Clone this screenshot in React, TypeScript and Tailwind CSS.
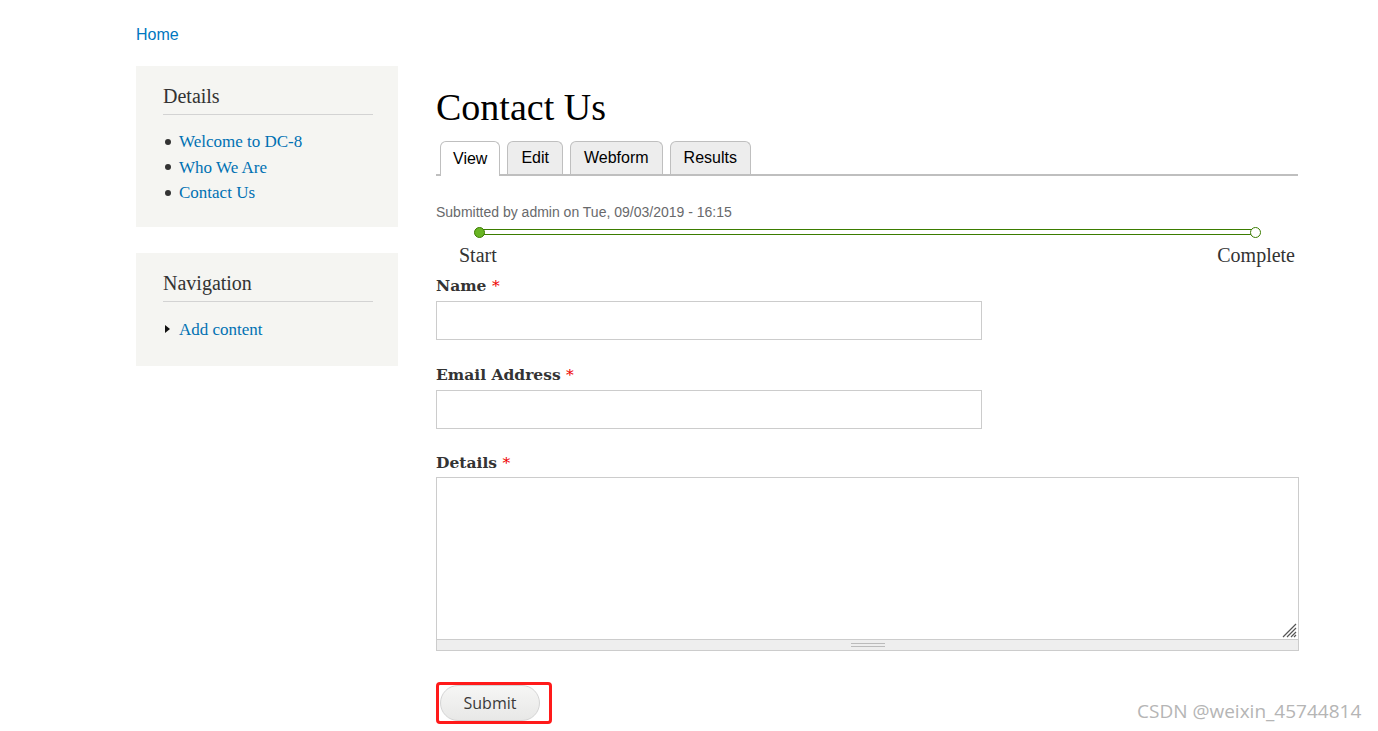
import React from "react";

const serif = "font-['Georgia','Liberation_Serif',serif]";
const label = "block font-['DejaVu_Serif',serif] text-[15.5px] font-bold leading-[20px]";

function Block({ title, children }: { title: string; children: React.ReactNode }) {
  return (
    <div className="bg-[#f5f5f2] px-[27px] pt-[18px] pb-[21px] pr-[25px]">
      <h2 className={`${serif} text-[20px] leading-[24px] text-[#333] pb-[6px] border-b border-[#d3d3d3]`}>{title}</h2>
      {children}
    </div>
  );
}

export default function App() {
  return (
    <div className="relative min-h-[731px] w-[1378px] bg-white">
      <div className="pl-[136px] pt-[22px]">
        <a className="font-['Liberation_Sans',Arial,sans-serif] text-[16px] leading-[22px] text-[#0077c0]">Home</a>
      </div>
      <div className="flex pl-[136px] pt-[20px]">
        {/* Sidebar */}
        <aside className="w-[262px] flex flex-col gap-[26px]">
          <Block title="Details">
            <ul className={`${serif} mt-[14px] text-[17px] leading-[25.5px] text-[#0071b3]`}>
              {["Welcome to DC-8", "Who We Are", "Contact Us"].map((t) => (
                <li key={t} className="flex items-center">
                  <span className="mr-[8px] ml-[2px] h-[6px] w-[6px] rounded-full bg-[#333]" />
                  <a>{t}</a>
                </li>
              ))}
            </ul>
          </Block>
          <Block title="Navigation">
            <ul className={`${serif} mt-[15px] mb-[3px] text-[17px] leading-[25.5px] text-[#0071b3]`}>
              <li className="flex items-center">
                <span className="ml-[2px] mr-[9px] h-0 w-0 border-y-[4px] border-l-[5px] border-y-transparent border-l-[#111]" />
                <a>Add content</a>
              </li>
            </ul>
          </Block>
        </aside>

        {/* Main */}
        <main className="ml-[38px] w-[862px]">
          <h1 className={`${serif} mt-[21px] text-[38px] leading-[40px] text-black`}>Contact Us</h1>
          <div className="mt-[14px] flex items-end gap-[7px] border-b-2 border-[#bfbfbf] pl-[4px] font-['Liberation_Sans',Arial,sans-serif] text-[16px]">
            <div className="-mb-[2px] flex h-[35px] items-center rounded-t-[6px] border border-b-0 border-[#bfbfbf] bg-white px-[12px] text-black">View</div>
            <div className="flex h-[33px] items-center rounded-t-[6px] border border-b-0 border-[#bfbfbf] bg-[#ededed] px-[13px] text-black">Edit</div>
            <div className="flex h-[33px] items-center rounded-t-[6px] border border-b-0 border-[#bfbfbf] bg-[#ededed] px-[13px] text-black">Webform</div>
            <div className="flex h-[33px] items-center rounded-t-[6px] border border-b-0 border-[#bfbfbf] bg-[#ededed] px-[13px] text-black">Results</div>
          </div>

          <p className="mt-[27px] font-['Liberation_Sans',Arial,sans-serif] text-[14px] leading-[18px] text-[#68696b]">
            Submitted by admin on Tue, 09/03/2019 - 16:15
          </p>

          {/* Progress */}
          <div className="relative mt-[5px] h-[14px]">
            <div className="absolute left-[44px] right-[43px] top-[3px] h-[6px] border-y-[1.5px] border-[#3b7c00]" />
            <div className="absolute left-[38px] top-[1px] h-[11px] w-[11px] rounded-full border border-[#3b7c00] bg-[#69b524]" />
            <div className="absolute right-[37px] top-[1px] h-[11px] w-[11px] rounded-full border border-[#3b7c00] bg-white" />
          </div>
          <div className={`${serif} mt-[3px] flex justify-between text-[20px] leading-[24px] text-[#333]`}>
            <span className="pl-[23px]">Start</span>
            <span className="pr-[3px]">Complete</span>
          </div>

          {/* Form */}
          <div className={`${serif} mt-[9px] text-[#333]`}>
            <label className={label}>
              Name <span className="font-normal text-[#e00]">*</span>
            </label>
            <div className="mt-[5px] h-[39px] w-[546px] border border-[#cccccc]" />

            <label className={`${label} mt-[25px]`}>
              Email Address <span className="font-normal text-[#e00]">*</span>
            </label>
            <div className="mt-[5px] h-[39px] w-[546px] border border-[#cccccc]" />

            <label className={`${label} mt-[24px]`}>
              Details <span className="font-normal text-[#e00]">*</span>
            </label>
            <div className="mt-[4px] w-[863px] border border-[#cccccc]">
              <div className="relative h-[161px]">
                <svg className="absolute bottom-[1px] right-[1px]" width="18" height="18" viewBox="0 0 18 18">
                  <path d="M17 4 L4 17 M17 8 L8 17 M17 12 L12 17 M17 15 L15 17" stroke="#555" strokeWidth="1.2" />
                </svg>
              </div>
              <div className="flex h-[11px] items-center justify-center border-t border-[#cccccc] bg-[#eeeeee]">
                <div className="h-[4px] w-[34px] border-y border-[#bbb]" />
              </div>
            </div>

            <div className="mt-[31px] inline-flex rounded-[4px] border-[3px] border-[#ff1a1a] pl-[1px] pr-[9px]">
              <button className="h-[36px] w-[100px] rounded-full border border-[#d4d4d4] bg-gradient-to-b from-[#f6f6f5] to-[#e8e8e7] font-['Open_Sans',sans-serif] text-[16px] text-[#3a3a3a]">
                Submit
              </button>
            </div>
          </div>
        </main>
      </div>

      <div className="absolute left-[1137px] top-[698px] font-['Open_Sans',sans-serif] text-[19px] leading-[26px] text-[#b5b5b5]">
        CSDN @weixin_45744814
      </div>
    </div>
  );
}
